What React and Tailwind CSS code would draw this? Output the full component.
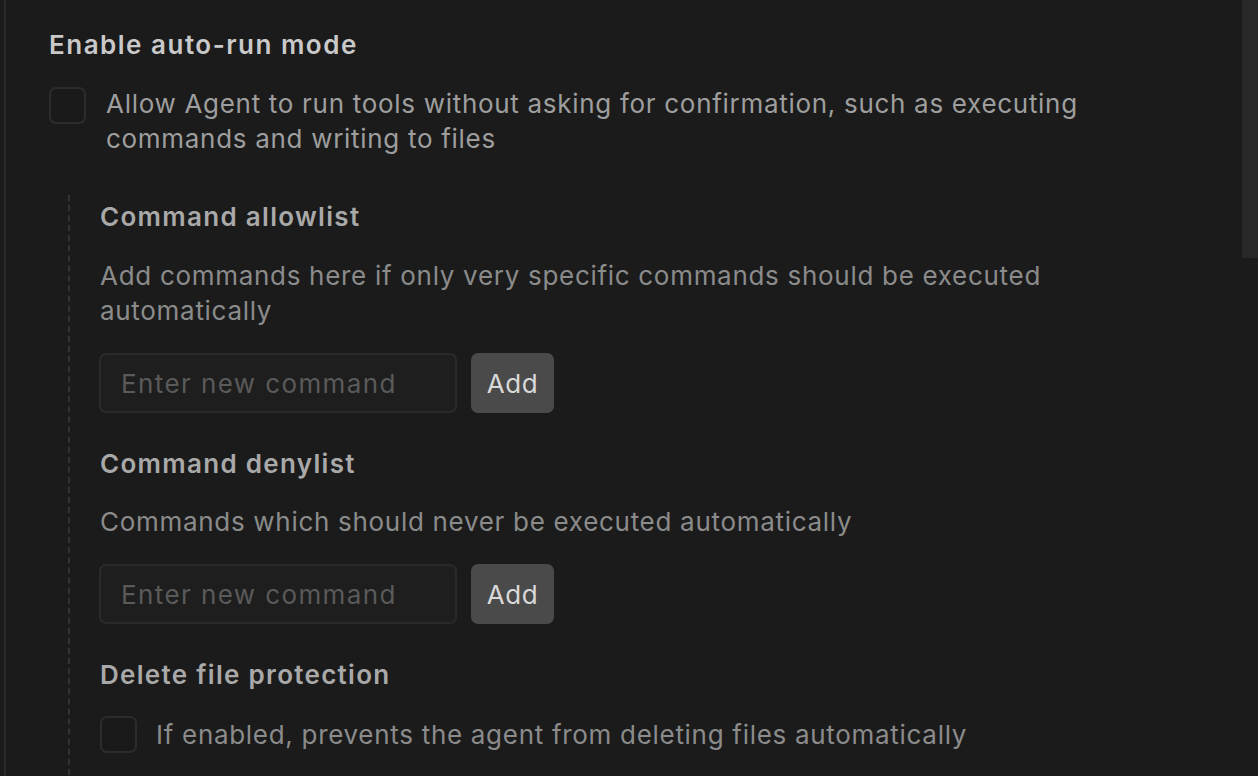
import React from 'react';

const Checkbox = () => (
    <div className="w-[37px] h-[37px] shrink-0 rounded-[7px] border-2 border-[#2c2c2c] bg-[#1a1a1a]" />
);

const CommandInput = () => (
    <div className="flex gap-[14px] -ml-[1px]">
        <input
            type="text"
            placeholder="Enter new command"
            className="w-[358px] h-[60px] rounded-[7px] border-2 border-[#2a2a2a] bg-[#1e1e1e] px-[20px] text-[26px] tracking-[1.4px] text-[#bbbbbb] placeholder:text-[#5a5a5a] outline-none"
        />
        <button className="w-[83px] h-[60px] rounded-[7px] bg-[#4a4a4a] text-[26px] tracking-[0.6px] text-[#d9d9d9]">
            Add
        </button>
    </div>
);

const App = () => {
    return (
        <div
            className="w-[1258px] h-[776px] overflow-hidden bg-[#1b1b1b] flex"
            style={{ fontFamily: 'Inter, "Noto Sans", sans-serif' }}
        >
            <div className="flex-1 ml-[4px] border-l-2 border-[#2a2a2a] pl-[43px] pt-[28px]">
                {/* Auto-run mode */}
                <h2 className="text-[26px] leading-[34px] tracking-[1.5px] font-semibold text-[#c9c9c9]">Enable auto-run mode</h2>
                <div className="mt-[25px] flex items-start gap-[20px]">
                    <Checkbox />
                    <p className="max-w-[1040px] text-[26px] leading-[35px] tracking-[0.7px] -mt-[1px] text-[#9e9e9e]">
                        Allow Agent to run tools without asking for confirmation, such as executing commands and writing to files
                    </p>
                </div>

                {/* Nested options */}
                <div className="mt-[39px] ml-[19px] h-[600px] border-l-2 border-dashed border-[#333333] pl-[30px] pt-[5px]">
                    <h3 className="text-[26px] leading-[34px] tracking-[1.3px] font-semibold text-[#a9a9a9]">Command allowlist</h3>
                    <p className="mt-[24px] max-w-[1040px] text-[26px] leading-[35px] tracking-[0.7px] text-[#8b8b8b]">
                        Add commands here if only very specific commands should be executed automatically
                    </p>
                    <div className="mt-[25px]">
                        <CommandInput />
                    </div>

                    <h3 className="mt-[34px] text-[26px] leading-[34px] tracking-[1.3px] font-semibold text-[#a9a9a9]">Command denylist</h3>
                    <p className="mt-[23px] text-[26px] leading-[35px] tracking-[0.7px] text-[#8b8b8b]">
                        Commands which should never be executed automatically
                    </p>
                    <div className="mt-[25px]">
                        <CommandInput />
                    </div>

                    <h3 className="mt-[34px] text-[26px] leading-[34px] tracking-[1.3px] font-semibold text-[#a9a9a9]">Delete file protection</h3>
                    <div className="mt-[24px] flex items-center gap-[19px]">
                        <Checkbox />
                        <p className="text-[26px] leading-[35px] tracking-[0.7px] text-[#8b8b8b]">
                            If enabled, prevents the agent from deleting files automatically
                        </p>
                    </div>
                </div>
            </div>

            {/* Scrollbar */}
            <div className="w-[16px] shrink-0">
                <div className="h-[258px] bg-[#282828]" />
            </div>
        </div>
    );
};

export default App;
